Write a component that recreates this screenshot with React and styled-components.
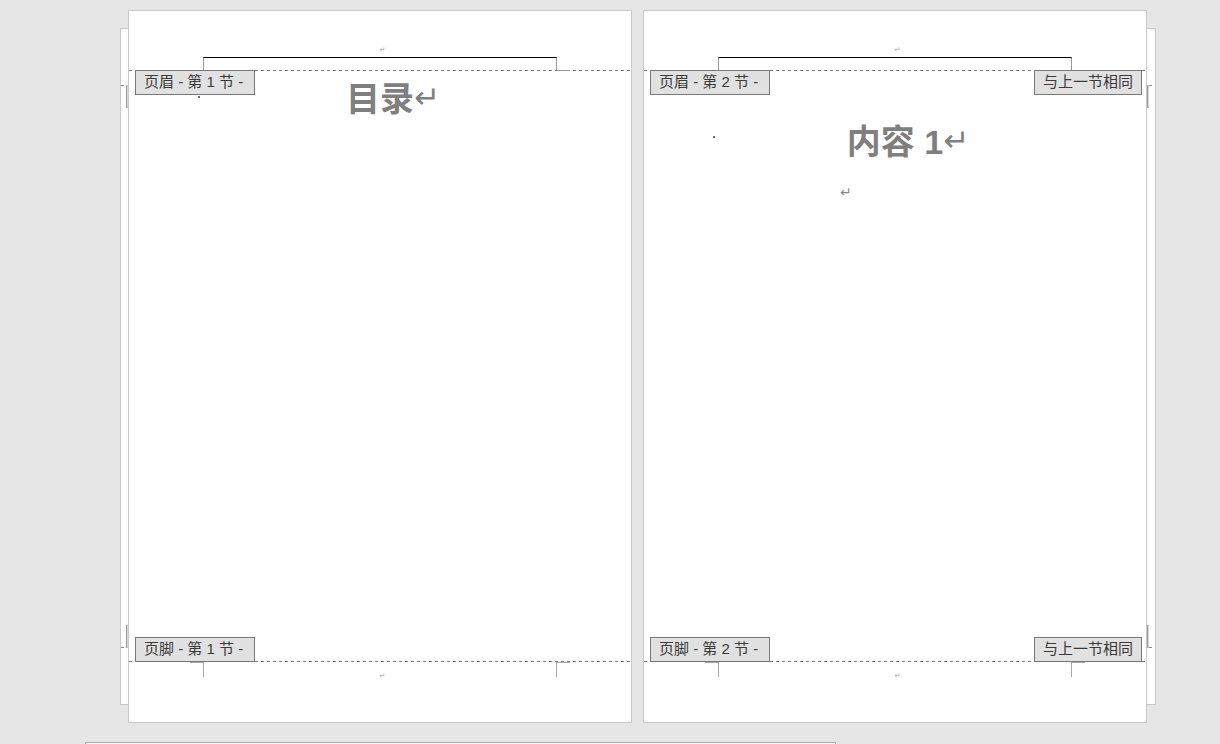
import React from 'react';
import styled, { createGlobalStyle } from 'styled-components';

const GlobalStyle = createGlobalStyle`
  html, body { margin: 0; padding: 0; background: #e6e6e6; }
  body { font-family: "Liberation Sans", "Noto Sans CJK SC", sans-serif; }
`;

const Workspace = styled.div`
  width: 1220px;
  height: 744px;
  overflow: hidden;
  background: #e6e6e6;
  display: flex;
  flex-direction: column;
`;

const PagesRow = styled.div`
  display: flex;
  align-items: center;
  padding: 10px 0 0 120px;
`;

const Peek = styled.div`
  box-sizing: border-box;
  width: ${p => (p.$side === 'left' ? 8 : 9)}px;
  height: 677px;
  background: #fff;
  border: 1px solid #c8c8c8;
  ${p => (p.$side === 'left' ? 'border-right: none;' : 'border-left: none;')}
  display: flex;
  flex-direction: column;
  justify-content: space-between;
  padding: 56px 0;
`;

const PeekMark = styled.div`
  display: flex;
  flex-direction: ${p => (p.$side === 'left' ? 'row' : 'row-reverse')};
  align-items: ${p => (p.$bottom ? 'flex-end' : 'flex-start')};
  justify-content: flex-end;
`;

const PeekDash = styled.div`
  width: 5px;
  height: 1px;
  background: repeating-linear-gradient(to right, #8a8a8a 0 3px, transparent 3px 5px);
`;

const PeekBracket = styled.div`
  box-sizing: border-box;
  width: 2px;
  height: 23px;
  border-left: 1px solid #9a9a9a;
  border-top: 1px solid #c0c0c0;
  border-bottom: 1px solid #c0c0c0;
  background: #d8d8d8;
`;

const Page = styled.section`
  box-sizing: border-box;
  position: relative;
  width: 504px;
  height: 713px;
  background: #fff;
  border: 1px solid #c8c8c8;
  display: flex;
  flex-direction: column;
  margin-left: ${p => (p.$second ? '11px' : '0')};
`;

const HeaderZone = styled.div`
  height: 59px;
  padding: 0 74px;
  display: flex;
  flex-direction: column;
  justify-content: flex-end;
`;

const TinyMark = styled.div`
  font-family: "DejaVu Sans", sans-serif;
  font-size: 7px;
  line-height: 8px;
  color: #a0a0a0;
  text-align: center;
  padding-left: 5px;
  margin-bottom: ${p => p.$mb || 0}px;
`;

const HeaderFrame = styled.div`
  box-sizing: border-box;
  position: relative;
  height: 13px;
  border-top: 1px solid #000;
  border-left: 1px solid #9a9a9a;
  border-right: 1px solid #9a9a9a;
  &::after {
    content: '';
    position: absolute;
    right: -14px;
    bottom: -1px;
    width: 13px;
    height: 1px;
    background: #9a9a9a;
  }
`;

const DashedRule = styled.div`
  height: 1px;
  flex: none;
  background: repeating-linear-gradient(to right, #7a7a7a 0 3px, transparent 3px 6px);
`;

const Body = styled.div`
  flex: 1;
  padding: 0 74px;
  display: flex;
  flex-direction: column;
`;

const Title = styled.h1`
  position: relative;
  margin: ${p => p.$top}px 0 0;
  font-family: "Liberation Sans", "Noto Sans CJK SC", sans-serif;
  font-size: 34px;
  font-weight: bold;
  line-height: 40px;
  color: #7f7f7f;
  text-align: center;
  white-space: nowrap;
  &::before {
    content: '';
    position: absolute;
    left: -5px;
    top: ${p => p.$dotTop}px;
    width: 2px;
    height: 2px;
    background: #6e6e6e;
  }
`;

const ParaMark = styled.span`
  display: inline-block;
  font-family: "DejaVu Sans", sans-serif;
  font-weight: normal;
  font-size: 31px;
  vertical-align: 3px;
  margin-right: -26px;
  color: #7f7f7f;
`;

const EmptyPara = styled.p`
  margin: ${p => p.$top}px 0 0;
  padding-left: ${p => p.$indent}px;
  font-family: "DejaVu Sans", sans-serif;
  font-size: 14px;
  line-height: 20px;
  color: #8a8a8a;
`;

const FooterZone = styled.div`
  height: 60px;
  padding: 0 74px;
  display: flex;
  flex-direction: column;
`;

const FooterFrame = styled.div`
  box-sizing: border-box;
  position: relative;
  height: 15px;
  border-left: 1px solid #a8a8a8;
  border-right: 1px solid #a8a8a8;
  padding-top: 10px;
  &::before, &::after {
    content: '';
    position: absolute;
    top: 0;
    width: 13px;
    height: 1px;
    background: #a8a8a8;
  }
  &::before { left: -14px; }
  &::after { right: -14px; }
`;

const SectionLabel = styled.div`
  position: absolute;
  box-sizing: border-box;
  height: 25px;
  ${p => (p.$right ? 'right: 4px; width: 108px;' : 'left: 6px; width: 120px;')}
  top: ${p => (p.$footer ? 626 : 59)}px;
  padding-left: 8px;
  background: #e1e1e1;
  border: 1px solid #777;
  font-family: "Liberation Sans", "Noto Sans CJK SC", sans-serif;
  font-size: 15px;
  line-height: 21px;
  color: #3a3a3a;
  white-space: nowrap;
`;

const BottomStrip = styled.div`
  box-sizing: border-box;
  margin: 19px 0 0 85px;
  width: 751px;
  height: 20px;
  flex: none;
  background: #f6f6f6;
  border: 1px solid #ababab;
`;

function DocPage({ second, section, linked, children }) {
  return (
    <Page $second={second}>
      <HeaderZone>
        <TinyMark $mb={3}>↵</TinyMark>
        <HeaderFrame />
      </HeaderZone>
      <DashedRule />
      <Body>{children}</Body>
      <DashedRule />
      <FooterZone>
        <FooterFrame>
          <TinyMark>↵</TinyMark>
        </FooterFrame>
      </FooterZone>
      <SectionLabel>{`页眉 - 第 ${section} 节 -`}</SectionLabel>
      <SectionLabel $footer>{`页脚 - 第 ${section} 节 -`}</SectionLabel>
      {linked && <SectionLabel $right>与上一节相同</SectionLabel>}
      {linked && <SectionLabel $right $footer>与上一节相同</SectionLabel>}
    </Page>
  );
}

export default function App() {
  return (
    <Workspace>
      <GlobalStyle />
      <PagesRow>
        <Peek $side="left">
          <PeekMark $side="left"><PeekDash /><PeekBracket /></PeekMark>
          <PeekMark $side="left" $bottom><PeekDash /><PeekBracket /></PeekMark>
        </Peek>
        <DocPage section={1}>
          <Title $top={6} $dotTop={19}>
            目录<ParaMark>↵</ParaMark>
          </Title>
        </DocPage>
        <DocPage second section={2} linked>
          <Title $top={49} $dotTop={16}>
            内容 1<ParaMark>↵</ParaMark>
          </Title>
          <EmptyPara $top={20} $indent={122}>↵</EmptyPara>
        </DocPage>
        <Peek $side="right">
          <PeekMark $side="right"><PeekDash /><PeekBracket /></PeekMark>
          <PeekMark $side="right" $bottom><PeekDash /><PeekBracket /></PeekMark>
        </Peek>
      </PagesRow>
      <BottomStrip />
    </Workspace>
  );
}
